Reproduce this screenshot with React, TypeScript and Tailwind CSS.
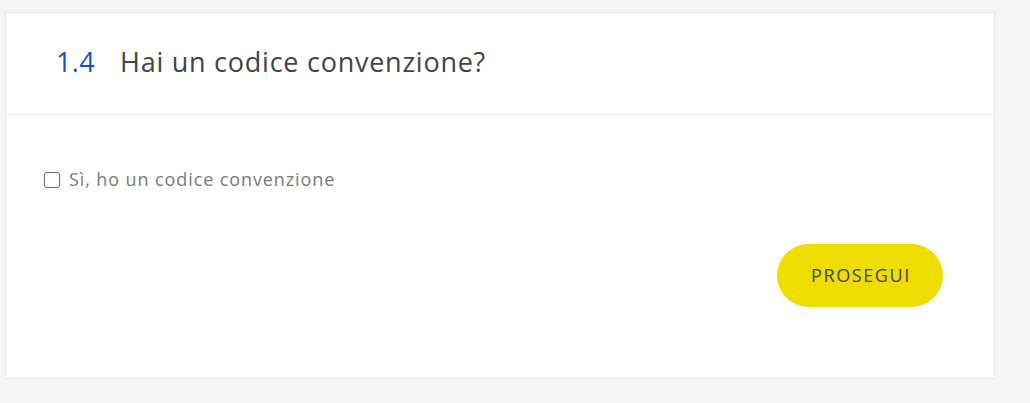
import { useState } from "react";

export default function App() {
  const [checked, setChecked] = useState(false);

  return (
    <div className="min-h-[403px] bg-[#f5f5f5] pt-[12px] pl-[5px]" style={{ fontFamily: "'Open Sans', Lato, sans-serif" }}>
      <div className="w-[990px] h-[367px] bg-white border border-[#e8e8e8] flex flex-col">
        <div className="h-[102px] border-b border-[#e8e8e8] flex items-center pl-[50px] pb-[2px]">
          <span className="text-[27px] text-[#1450c8] w-[64px] tracking-[0.3px]">1.4</span>
          <span className="text-[27px] text-[#444444] tracking-[0.75px]">Hai un codice convenzione?</span>
        </div>
        <div className="flex-1 flex flex-col pl-[38px] pr-[51px]">
          <label className="mt-[51px] flex items-center gap-[9px] cursor-pointer select-none w-fit">
            <input type="checkbox" checked={checked} onChange={e => setChecked(e.target.checked)} className="hidden" />
            <span className="w-[16px] h-[16px] rounded-[3px] border-[1.5px] border-[#6b6b6b] bg-white" />
            <span className="text-[18px] text-[#7a7a7a] tracking-[0.9px]">Sì, ho un codice convenzione</span>
          </label>
          <div className="flex justify-end mt-[51px]">
            <button className="w-[166px] h-[63px] rounded-full bg-[#eedd00] text-[18px] text-[#444444] tracking-[1.6px] pl-[2px]">
              PROSEGUI
            </button>
          </div>
        </div>
      </div>
    </div>
  );
}
